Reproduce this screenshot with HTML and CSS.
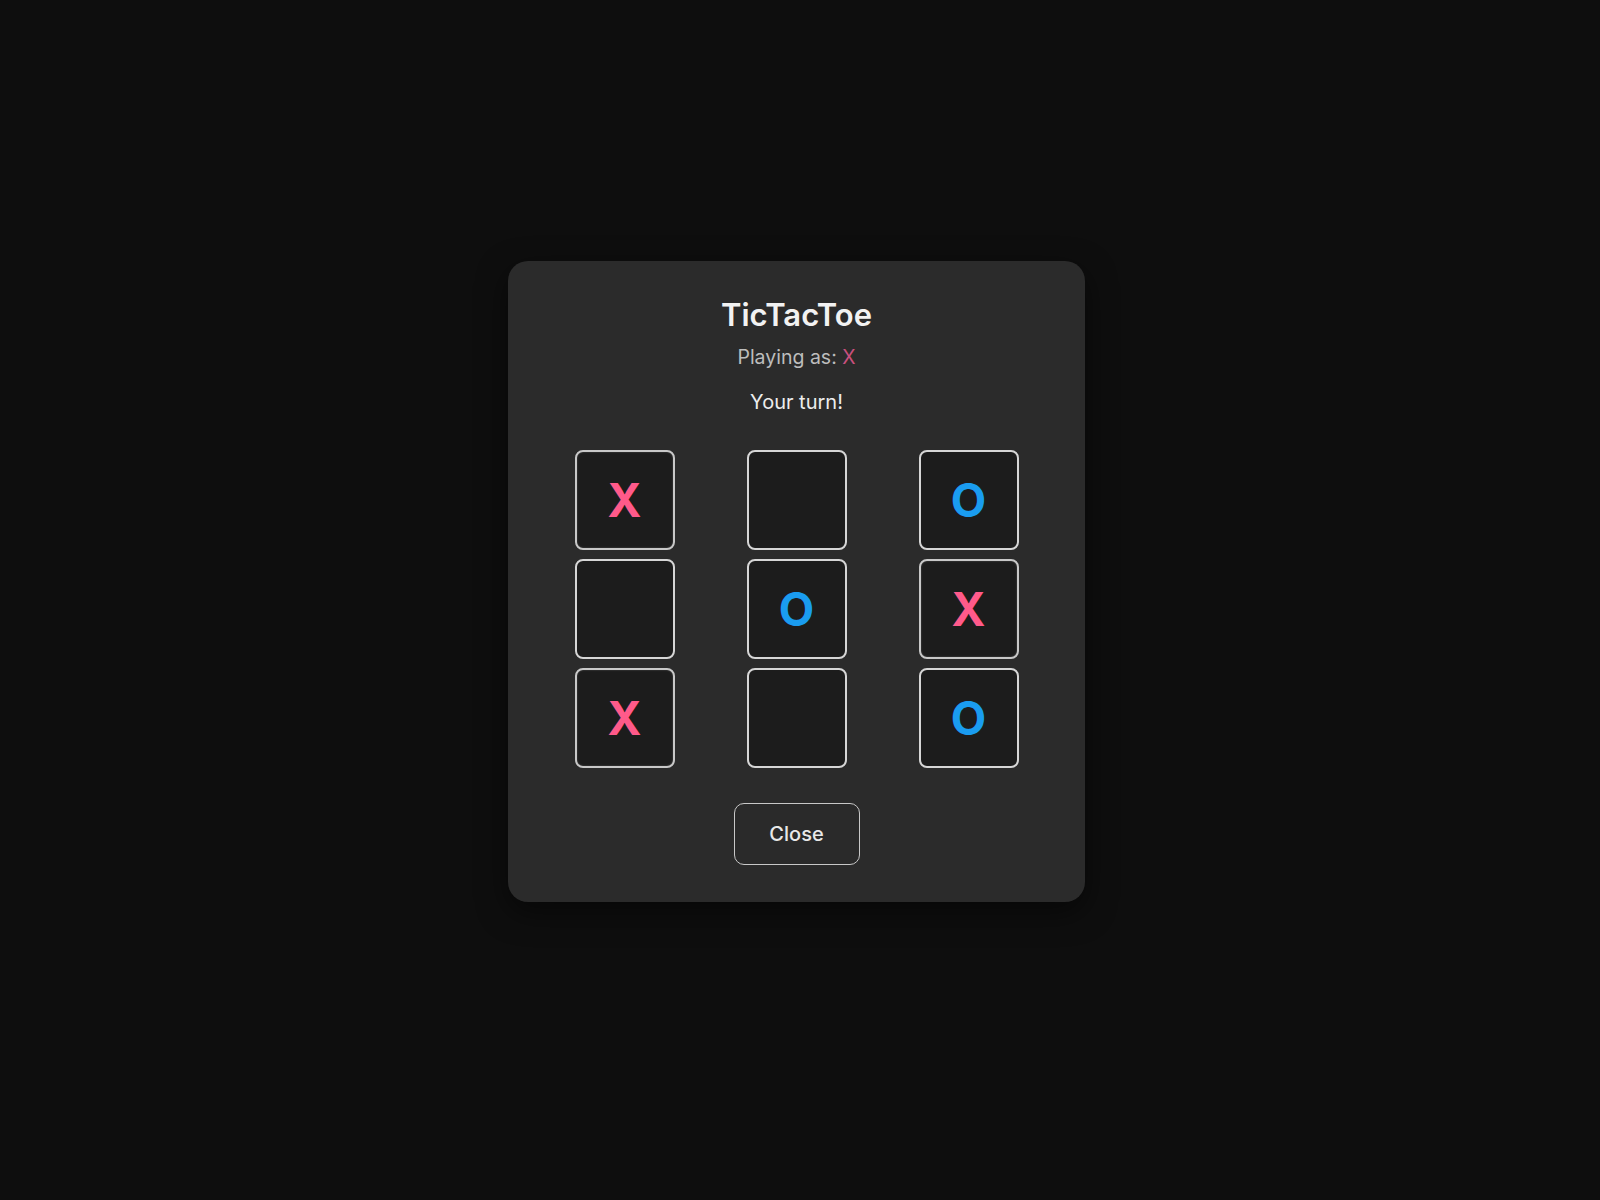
FILE: index.html
```html
<!DOCTYPE html>
<html lang="en">
<head>
<meta charset="utf-8">
<title>TicTacToe</title>
<link rel="stylesheet" href="styles.css">
</head>
<body>
<div class="stage">
  <div class="modal">
    <h1 class="title">TicTacToe</h1>
    <p class="playing">Playing as: <span class="mark-x">X</span></p>
    <p class="status">Your turn!</p>
    <div class="board">
      <button class="cell x">X</button>
      <button class="cell"></button>
      <button class="cell o">O</button>
      <button class="cell"></button>
      <button class="cell o">O</button>
      <button class="cell x">X</button>
      <button class="cell x">X</button>
      <button class="cell"></button>
      <button class="cell o">O</button>
    </div>
    <button class="close">Close</button>
  </div>
</div>
</body>
</html>
```

FILE: styles.css
```css
html, body {
  margin: 0;
  padding: 0;
  background: #0e0e0e;
  font-family: Inter, "Noto Sans", sans-serif;
}

.stage {
  box-sizing: border-box;
  width: 1600px;
  height: 1200px;
  padding: 0 7px 38px 0;
  display: flex;
  align-items: center;
  justify-content: center;
}

.modal {
  box-sizing: border-box;
  width: 577px;
  padding: 35px 0 37px;
  background: #2b2b2b;
  border-radius: 20px;
  box-shadow: 0 10px 30px rgba(0, 0, 0, 0.5);
  display: flex;
  flex-direction: column;
  align-items: center;
}

.title {
  margin: 0;
  font-size: 31px;
  font-weight: 600;
  color: #f2f2f2;
  line-height: normal;
}

.playing {
  margin: 12px 0 0;
  font-size: 19.5px;
  color: #bdbdbd;
  line-height: normal;
}

.mark-x {
  color: #c9507e;
}

.status {
  margin: 21px 0 0;
  font-size: 20px;
  color: #ededed;
  line-height: normal;
}

.board {
  margin-top: 36px;
  display: grid;
  grid-template-columns: repeat(3, 100px);
  grid-auto-rows: 100px;
  column-gap: 72px;
  row-gap: 9px;
}

.cell {
  box-sizing: border-box;
  width: 100px;
  height: 100px;
  padding: 0;
  background: #1c1c1c;
  border: 2px solid #d6d6d6;
  border-radius: 8px;
  font-family: Inter, "Noto Sans", sans-serif;
  font-size: 46px;
  font-weight: 700;
  display: flex;
  align-items: center;
  justify-content: center;
}

.cell.x {
  color: #ff5a8a;
  border-color: #c8c8c8;
  box-shadow: inset 0 0 2px rgba(255, 255, 255, 0.25);
}

.cell.o {
  color: #1a9cf0;
}

.close {
  box-sizing: border-box;
  margin-top: 35px;
  width: 126px;
  height: 62px;
  background: #2a2a2a;
  border: 1.5px solid #c8c8c8;
  border-radius: 10px;
  color: #e8e8e8;
  font-family: Inter, "Noto Sans", sans-serif;
  font-size: 20px;
  font-weight: 500;
}
```
